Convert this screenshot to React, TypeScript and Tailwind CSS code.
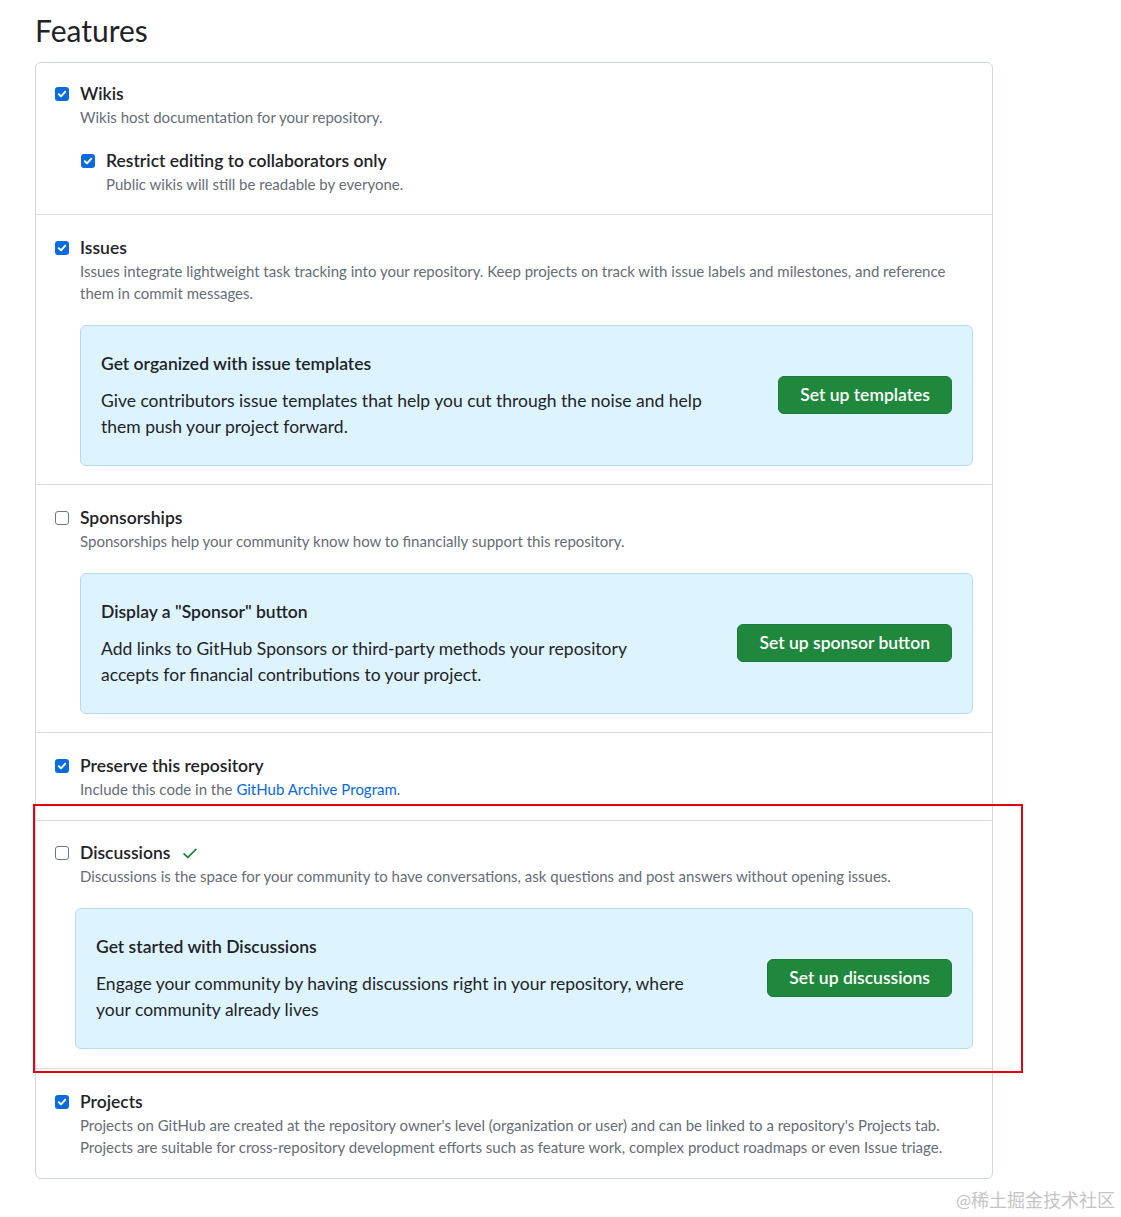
import React from "react";

const FONT = { fontFamily: 'Lato, "Noto Sans", "Noto Sans CJK SC", sans-serif' };

function Checkbox({ checked }: { checked: boolean }) {
  if (checked) {
    return (
      <div className="w-[14px] h-[14px] shrink-0 rounded-[3px] bg-[#0b6bde] flex items-center justify-center">
        <svg width="10" height="10" viewBox="0 0 10 10">
          <path d="M1.8 5.2 L4 7.3 L8.3 2.6" stroke="white" strokeWidth="1.9" fill="none" strokeLinecap="round" strokeLinejoin="round" />
        </svg>
      </div>
    );
  }
  return <div className="w-[14px] h-[14px] shrink-0 rounded-[3px] border border-[#6e7781] bg-white" />;
}

function Item({
  checked,
  title,
  children,
  extra,
}: {
  checked: boolean;
  title: React.ReactNode;
  children?: React.ReactNode;
  extra?: React.ReactNode;
}) {
  return (
    <div>
      <div className="flex items-center gap-[11px] h-[24px]">
        <Checkbox checked={checked} />
        <div className="text-[17.5px] leading-[24px] font-semibold text-[#1f2328] flex items-center">{title}</div>
      </div>
      <div className="pl-[25px] text-[15px] leading-[22px] text-[#656d76]">{children}</div>
      {extra}
    </div>
  );
}

function Promo({
  title,
  body,
  button,
  className,
}: {
  title: string;
  body: React.ReactNode;
  button: string;
  className: string;
}) {
  return (
    <div
      className={
        "mt-[21px] rounded-[6px] border border-[#b6dcf3] bg-[#ddf4ff] pl-[20px] pr-[20px] pt-[24px] pb-[25px] flex items-center " +
        className
      }
    >
      <div className="flex-1">
        <div className="text-[17.5px] leading-[28px] font-semibold text-[#1f2328]">{title}</div>
        <div className="mt-[10px] text-[17.5px] leading-[26px] text-[#1f2328]">{body}</div>
      </div>
      <button className="h-[38px] px-[21px] rounded-[6px] bg-[#1f883d] text-white text-[17.5px] font-semibold border border-[#1b7a37] whitespace-nowrap">
        {button}
      </button>
    </div>
  );
}

export default function App() {
  return (
    <div className="bg-white min-h-[1217px] w-[1121px] relative" style={FONT}>
      <div className="pl-[35px] pt-[12px]">
        <h2 className="text-[30px] leading-[36px] font-normal text-[#1f2328]">Features</h2>
        <div className="mt-[14px] w-[958px] rounded-[6px] border border-[#d0d7de]">
          {/* Wikis */}
          <div className="px-[19px] pt-[19px] pb-[19px] border-b border-[#d8dee4]">
            <Item checked title="Wikis">
              Wikis host documentation for your repository.
            </Item>
            <div className="pl-[26px] mt-[21px]">
              <Item checked title="Restrict editing to collaborators only">
                Public wikis will still be readable by everyone.
              </Item>
            </div>
          </div>
          {/* Issues */}
          <div className="px-[19px] pt-[21px] pb-[18px] border-b border-[#d8dee4]">
            <Item checked title="Issues">
              Issues integrate lightweight task tracking into your repository. Keep projects on track with issue labels and milestones, and reference
              <br />
              them in commit messages.
            </Item>
            <div className="pl-[25px]">
              <Promo
                className="w-[893px]"
                title="Get organized with issue templates"
                body={
                  <>
                    Give contributors issue templates that help you cut through the noise and help
                    <br />
                    them push your project forward.
                  </>
                }
                button="Set up templates"
              />
            </div>
          </div>
          {/* Sponsorships */}
          <div className="px-[19px] pt-[21px] pb-[18px] border-b border-[#d8dee4]">
            <Item checked={false} title="Sponsorships">
              Sponsorships help your community know how to financially support this repository.
            </Item>
            <div className="pl-[25px]">
              <Promo
                className="w-[893px]"
                title={'Display a "Sponsor" button'}
                body={
                  <>
                    Add links to GitHub Sponsors or third-party methods your repository
                    <br />
                    accepts for financial contributions to your project.
                  </>
                }
                button="Set up sponsor button"
              />
            </div>
          </div>
          {/* Preserve */}
          <div className="px-[19px] pt-[21px] pb-[20px] border-b border-[#d8dee4]">
            <Item checked title="Preserve this repository">
              Include this code in the <span className="text-[#0969da]">GitHub Archive Program</span>.
            </Item>
          </div>
          {/* Discussions */}
          <div className="relative px-[19px] pt-[20px] pb-[19px] border-b border-[#d8dee4]">
            <Item
              checked={false}
              title={
                <>
                  Discussions
                  <svg className="ml-[11px]" width="18" height="18" viewBox="0 0 16 16" fill="#1a7f37">
                    <path d="M13.78 4.22a.75.75 0 0 1 0 1.06l-7.25 7.25a.75.75 0 0 1-1.06 0L2.22 9.28a.751.751 0 0 1 .018-1.042.751.751 0 0 1 1.042-.018L6 10.94l6.72-6.72a.75.75 0 0 1 1.06 0Z" />
                  </svg>
                </>
              }
            >
              Discussions is the space for your community to have conversations, ask questions and post answers without opening issues.
            </Item>
            <div className="pl-[20px]">
              <Promo
                className="w-[898px]"
                title="Get started with Discussions"
                body={
                  <>
                    Engage your community by having discussions right in your repository, where
                    <br />
                    your community already lives
                  </>
                }
                button="Set up discussions"
              />
            </div>
            <div className="absolute left-[-3px] right-[-31px] top-[-17px] bottom-[-5px] border-2 border-[#e60012] pointer-events-none" />
          </div>
          {/* Projects */}
          <div className="px-[19px] pt-[21px] pb-[20px]">
            <Item checked title="Projects">
              Projects on GitHub are created at the repository owner's level (organization or user) and can be linked to a repository's Projects tab.
              <br />
              Projects are suitable for cross-repository development efforts such as feature work, complex product roadmaps or even Issue triage.
            </Item>
          </div>
        </div>
        <div className="w-[1080px] flex justify-end mt-[9px]">
          <span className="text-[18px] leading-[24px] text-[#c4c4c4]">@稀土掘金技术社区</span>
        </div>
      </div>
    </div>
  );
}
